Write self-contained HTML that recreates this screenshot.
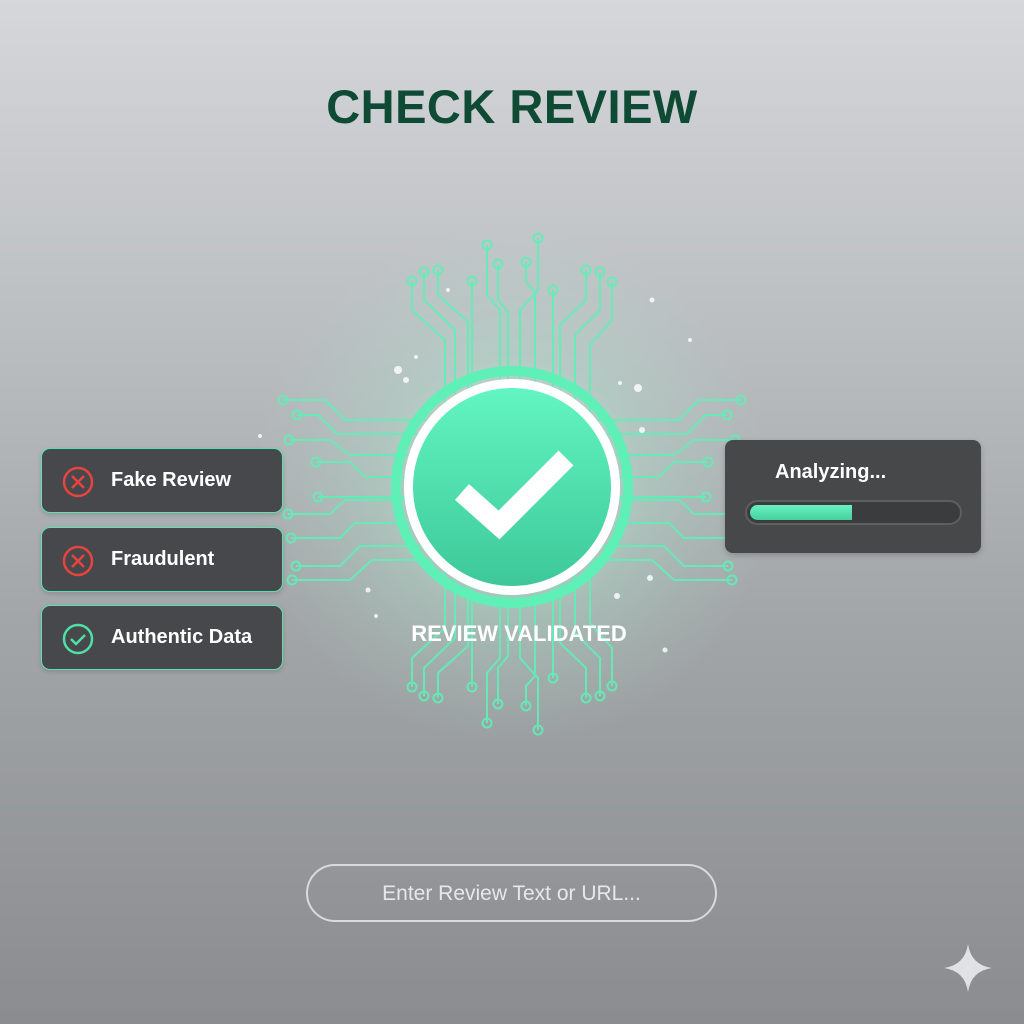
<!DOCTYPE html>
<html><head><meta charset="utf-8"><style>
html,body{margin:0;padding:0}
body{width:1024px;height:1024px;position:relative;overflow:hidden;font-family:"Liberation Sans",sans-serif;background:linear-gradient(180deg,#d5d7da 0%,#b9bcbf 35%,#a3a6a8 60%,#8a8c90 100%)}
.title{position:absolute;top:79px;left:0;width:1024px;text-align:center;font-size:47px;font-weight:bold;color:#0f4a34;letter-spacing:0.5px}
.card{position:absolute;left:41px;width:242px;height:65px;background:#46484b;border:1.5px solid #5be3ad;border-radius:9px;box-sizing:border-box;color:#fff;font-weight:bold;font-size:20px;box-shadow:0 2px 5px rgba(0,0,0,.15)}
.card span{position:absolute;left:69px;top:20px}
.card svg{position:absolute;left:20px;top:17px}
.panel{position:absolute;left:725px;top:440px;width:256px;height:113px;background:#464849;border-radius:8px;box-shadow:0 2px 6px rgba(0,0,0,.2)}
.panel .t{position:absolute;left:50px;top:21px;color:#fff;font-weight:bold;font-size:20px}
.bar{position:absolute;left:20px;top:60px;width:217px;height:25px;border-radius:13px;background:#3a3c3e;border:2px solid #5c5e60;box-sizing:border-box}
.bar div{position:absolute;left:3px;top:3px;width:102px;height:15px;border-radius:8px 0 0 8px;background:linear-gradient(#6af2c0,#45d09e)}
.input{position:absolute;left:306px;top:864px;width:411px;height:58px;border:2px solid #d8dadc;border-radius:29px;box-sizing:border-box;text-align:center;line-height:56px;color:#e6e7e8;font-size:21px}
.val{position:absolute;left:0;width:1038px;top:621px;text-align:center;color:#fff;font-weight:bold;font-size:22px}
</style></head><body>
<div class="title">CHECK REVIEW</div>
<svg width="1024" height="1024" style="position:absolute;left:0;top:0">
<defs>
<radialGradient id="glow" cx="512" cy="487" r="260" gradientUnits="userSpaceOnUse">
<stop offset="0" stop-color="#c8f5e2" stop-opacity=".9"/><stop offset=".5" stop-color="#b0e6cf" stop-opacity=".35"/><stop offset="1" stop-color="#a8d8c4" stop-opacity="0"/></radialGradient>
<linearGradient id="fill" x1="0" y1="0" x2="0" y2="1"><stop offset="0" stop-color="#62f5c2"/><stop offset="1" stop-color="#3ec899"/></linearGradient>
<g id="side">
<path d="M283,400H325L345,420H512M297,415H318L337,434H512M289,440H330L350,455H512M316,462H350L365,477H512M318,497H512M288,514H330L345,500H512M291,538H340L355,523H512M296,566H340L360,546H512M292,580H350L372,560H512"/>
<circle cx="283" cy="400" r="4.5"/><circle cx="297" cy="415" r="4.5"/><circle cx="289" cy="440" r="4.5"/><circle cx="316" cy="462" r="4.5"/><circle cx="318" cy="497" r="4.5"/><circle cx="288" cy="514" r="4.5"/><circle cx="291" cy="538" r="4.5"/><circle cx="296" cy="566" r="4.5"/><circle cx="292" cy="580" r="4.5"/>
</g>
<g id="top">
<path d="M412,281V310L445,340V487M424,272V300L455,330V487M438,270V295L468,322V487M472,281V487M487,245V295L500,310V487M498,264V300L508,312V487M538,238V290L520,310V487M526,262V282L535,292V487M553,290V487M586,270V300L560,325V487M600,272V310L575,335V487M612,282V320L590,345V487"/>
<circle cx="412" cy="281" r="4.5"/><circle cx="424" cy="272" r="4.5"/><circle cx="438" cy="270" r="4.5"/><circle cx="472" cy="281" r="4.5"/><circle cx="487" cy="245" r="4.5"/><circle cx="498" cy="264" r="4.5"/><circle cx="538" cy="238" r="4.5"/><circle cx="526" cy="262" r="4.5"/><circle cx="553" cy="290" r="4.5"/><circle cx="586" cy="270" r="4.5"/><circle cx="600" cy="272" r="4.5"/><circle cx="612" cy="282" r="4.5"/>
</g>
</defs>
<circle cx="512" cy="487" r="260" fill="url(#glow)"/>
<g fill="none" stroke="#5ff0b8" stroke-width="2" opacity=".9">
<use href="#side"/>
<use href="#side" transform="translate(1024,0) scale(-1,1)"/>
<use href="#top"/>
<use href="#top" transform="translate(0,968) scale(1,-1)"/>
</g>
<g fill="#fff" opacity=".8">
<circle cx="398" cy="370" r="4"/><circle cx="406" cy="380" r="3"/><circle cx="652" cy="300" r="2.5"/><circle cx="638" cy="388" r="4"/><circle cx="620" cy="383" r="2"/><circle cx="642" cy="430" r="3"/><circle cx="368" cy="590" r="2.5"/><circle cx="650" cy="578" r="3"/><circle cx="665" cy="650" r="2.5"/><circle cx="416" cy="357" r="2"/><circle cx="448" cy="290" r="2"/><circle cx="376" cy="616" r="2"/><circle cx="260" cy="436" r="2"/><circle cx="690" cy="340" r="2"/><circle cx="617" cy="596" r="3"/></g>
<circle cx="512" cy="487" r="116" fill="none" stroke="#5ff0b8" stroke-width="10"/>
<circle cx="512" cy="487" r="108" fill="#fff"/>
<circle cx="512" cy="487" r="99" fill="url(#fill)"/>
<path d="M462,492 L499,525 L566,458" fill="none" stroke="#fff" stroke-width="21"/>
<path d="M968,944 Q971,965 992,968 Q971,971 968,992 Q965,971 944,968 Q965,965 968,944Z" fill="#eef0f2" opacity=".85"/>
</svg>
<div class="val">REVIEW VALIDATED</div>
<div class="card" style="top:448px"><svg width="32" height="32"><circle cx="16" cy="16" r="14" fill="none" stroke="#e8443f" stroke-width="2.5"/><path d="M10,10L22,22M22,10L10,22" stroke="#e8443f" stroke-width="2.5"/></svg><span>Fake Review</span></div>
<div class="card" style="top:527px"><svg width="32" height="32"><circle cx="16" cy="16" r="14" fill="none" stroke="#e8443f" stroke-width="2.5"/><path d="M10,10L22,22M22,10L10,22" stroke="#e8443f" stroke-width="2.5"/></svg><span>Fraudulent</span></div>
<div class="card" style="top:605px"><svg width="32" height="32"><circle cx="16" cy="16" r="14" fill="none" stroke="#4fe0a6" stroke-width="2.5"/><path d="M9,16L14,21L23,12" fill="none" stroke="#4fe0a6" stroke-width="2.5"/></svg><span>Authentic Data</span></div>
<div class="panel"><div class="t">Analyzing...</div><div class="bar"><div></div></div></div>
<div class="input">Enter Review Text or URL...</div>
</body></html>
